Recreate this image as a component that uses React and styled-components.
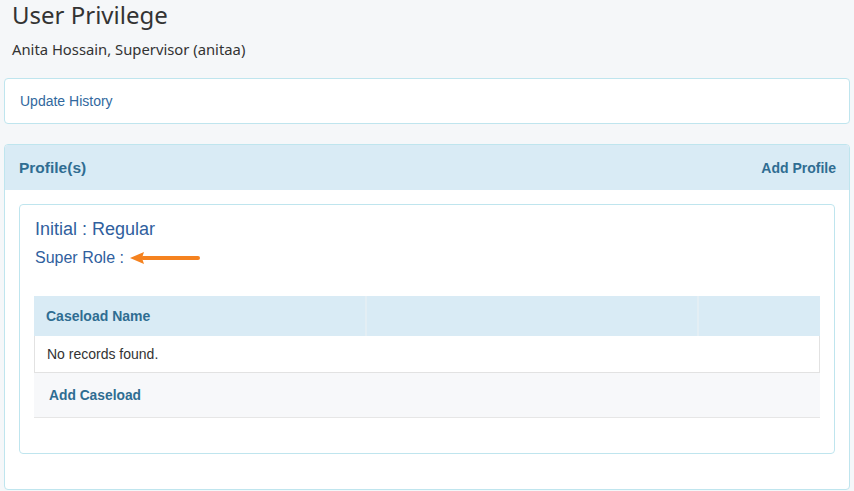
import React from "react";
import styled, { createGlobalStyle } from "styled-components";

const Global = createGlobalStyle`
  html, body { margin: 0; padding: 0; background: #f5f7f9; }
  body { font-family: "Liberation Sans", Arial, sans-serif; color: #333; }
`;

const Page = styled.div`
  padding: 0 4px 2px 4px;
`;

const Header = styled.div`
  padding: 0 8px;
  font-family: "Noto Sans", "Open Sans", sans-serif;
  color: #333;
`;

const Title = styled.h1`
  margin: 0;
  font-size: 24px;
  font-weight: 400;
  line-height: 29px;
`;

const Subtitle = styled.div`
  margin-top: 10px;
  font-size: 14.8px;
  line-height: 20px;
`;

const Card = styled.div`
  margin-top: ${(p) => p.$mt || 0}px;
  background: #fff;
  border: 1px solid #bfe5ee;
  border-radius: 4px;
`;

const LinkRow = styled.div`
  height: 44px;
  display: flex;
  align-items: center;
  padding: 0 15px;
  font-size: 14px;
  color: #31689e;
`;

const Panel = styled(Card)`
  overflow: hidden;
  padding-bottom: 35px;
`;

const PanelHead = styled.div`
  height: 45px;
  display: flex;
  align-items: center;
  justify-content: space-between;
  padding: 0 13px 0 14px;
  background: #d9ebf5;
`;

const PanelTitle = styled.div`
  font-size: 15.5px;
  font-weight: 700;
  color: #2f6d92;
`;

const HeadLink = styled.div`
  font-size: 14px;
  font-weight: 700;
  color: #2f6d92;
`;

const Inner = styled.div`
  margin: 14px 14px 0 14px;
  background: #fff;
  border: 1px solid #bfe5ee;
  border-radius: 4px;
  padding: 12px 14px 35px 14px;
`;

const RoleLine = styled.div`
  display: flex;
  align-items: center;
  font-size: ${(p) => p.$size}px;
  line-height: ${(p) => p.$lh}px;
  margin-top: ${(p) => p.$mt || 0}px;
  color: #30609e;
  padding-left: 1px;
`;

const Arrow = styled.svg`
  margin-left: 5px;
  display: block;
`;

const Table = styled.div`
  margin-top: 26px;
`;

const HeadRow = styled.div`
  display: grid;
  grid-template-columns: 331px 332px 1fr;
  height: 40px;
  background: #d9ebf5;
`;

const HeadCell = styled.div`
  display: flex;
  align-items: center;
  padding: 0 12px;
  font-size: 14px;
  font-weight: 700;
  color: #2f6d92;
  & + & { border-left: 2px solid #e3eef4; }
`;

const BodyRow = styled.div`
  height: 36px;
  display: flex;
  align-items: center;
  padding: 0 12px;
  font-size: 14px;
  color: #333;
  background: #fff;
  border: 1px solid #e2e2e2;
  border-top: none;
`;

const FootRow = styled.div`
  height: 44px;
  display: flex;
  align-items: center;
  padding: 0 15px;
  font-size: 13.8px;
  font-weight: 700;
  color: #2f6d92;
  background: #f7f8fa;
  border-bottom: 1px solid #e6e6e6;
`;

export default function App() {
  return (
    <>
      <Global />
      <Page>
        <Header>
          <Title>User Privilege</Title>
          <Subtitle>Anita Hossain, Supervisor (anitaa)</Subtitle>
        </Header>
        <Card $mt={19}>
          <LinkRow>Update History</LinkRow>
        </Card>
        <Panel $mt={20}>
          <PanelHead>
            <PanelTitle>Profile(s)</PanelTitle>
            <HeadLink>Add Profile</HeadLink>
          </PanelHead>
          <Inner>
            <RoleLine $size={18} $lh={24}>Initial : Regular</RoleLine>
            <RoleLine $size={16} $lh={24} $mt={5}>
              Super Role :
              <Arrow width="72" height="16" viewBox="0 0 72 16">
                <path d="M14 8 H69" stroke="#f5821f" strokeWidth="4" strokeLinecap="round" />
                <path d="M1 8 L15 2 L13 8 L15 14 Z" fill="#f5821f" />
              </Arrow>
            </RoleLine>
            <Table>
              <HeadRow>
                <HeadCell>Caseload Name</HeadCell>
                <HeadCell />
                <HeadCell />
              </HeadRow>
              <BodyRow>No records found.</BodyRow>
              <FootRow>Add Caseload</FootRow>
            </Table>
          </Inner>
        </Panel>
      </Page>
    </>
  );
}
